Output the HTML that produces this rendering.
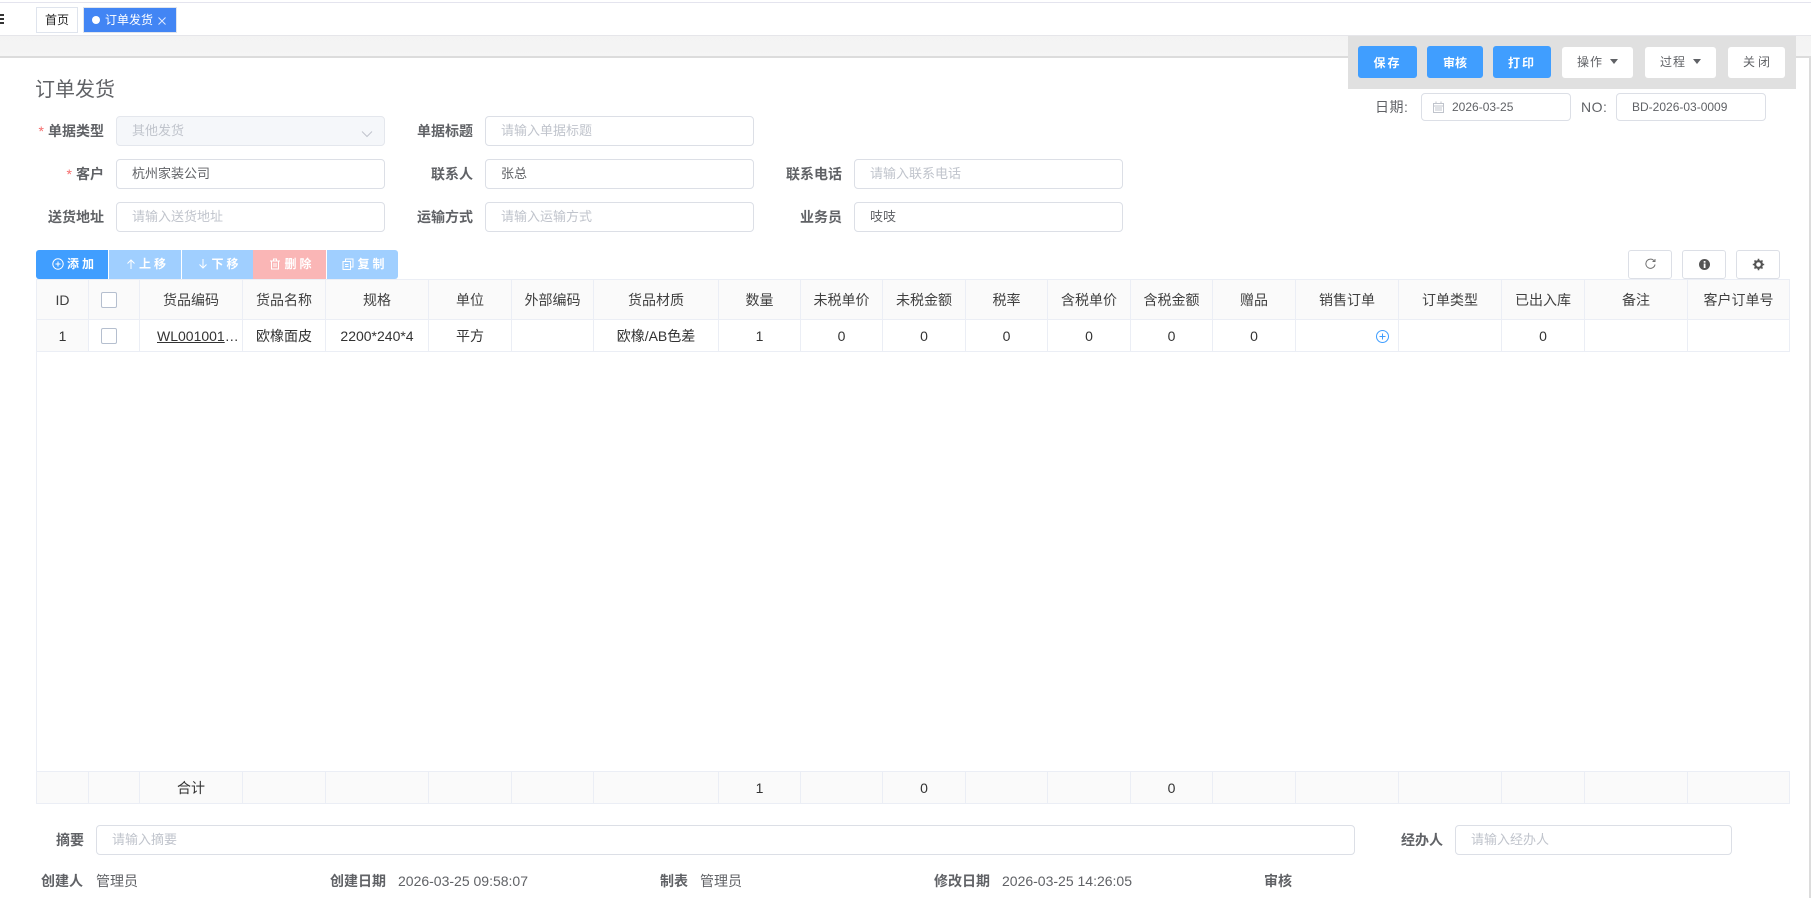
<!DOCTYPE html>
<html lang="zh-CN"><head><meta charset="utf-8"><title>订单发货</title>
<style>
*{box-sizing:border-box}
html,body{margin:0;padding:0;width:1811px;height:898px;overflow:hidden;background:#fff;font-family:"Liberation Sans","Noto Sans CJK SC",sans-serif;color:#606266}
.a{position:absolute;white-space:nowrap}
.lb{position:absolute;height:30px;line-height:30px;font-size:14px;font-weight:700;color:#606266;text-align:right;white-space:nowrap}
.lb i{font-style:normal;color:#f56c6c;font-weight:400;margin-right:4px}
.in{position:absolute;height:30px;line-height:28px;border:1px solid #dcdfe6;border-radius:4px;background:#fff;padding-left:15px;font-size:13px;color:#606266;white-space:nowrap}
.in.s{font-size:12px}
.ph{color:#c0c4cc}
.btn{position:absolute;border-radius:3px;text-align:center;font-size:12px;white-space:nowrap}
.p{background:#409eff;color:#fff;font-weight:700;top:46px;height:32px;line-height:32px;letter-spacing:2px;border:1px solid #409eff}
.w{background:#fff;color:#606266;top:47px;height:31px;line-height:31px;letter-spacing:1px}
.car{display:inline-block;width:0;height:0;border:4px solid transparent;border-top:5px solid #606266;border-bottom:0;margin-left:7px;vertical-align:2px}
.g{position:absolute;top:250px;height:29px;line-height:29px;color:#fff;font-size:12px;font-weight:700;letter-spacing:3px;text-align:center;white-space:nowrap;padding-left:5px}
.g svg{vertical-align:-2px;margin-right:3px}
.tb{position:absolute;top:250px;height:29px;width:44px;border:1px solid #dcdfe6;border-radius:3px;background:#fff}
.tb svg{position:absolute;left:15px;top:7px}
table{position:absolute;left:36px;border-collapse:collapse;table-layout:fixed;width:1754px;font-size:14px;color:#333}
td{border:1px solid #ebeef5;padding:0;text-align:center;overflow:hidden;white-space:nowrap}
.hd td{background:#fafafa;height:40px;color:#404040}
.rw td{height:32px;font-size:14px;color:#333}
.ft td{background:#fafafa;height:32px;font-size:14px}
.cb{display:inline-block;width:16px;height:16px;border:1px solid #b5bfcf;border-radius:2px;background:#fff;vertical-align:middle}
.ck{text-align:left;padding-left:12px}
.ds{position:absolute;top:881px;transform:translateY(-50%);font-size:14px;color:#606266;white-space:nowrap}
.ds b{font-weight:700}
</style></head><body>

<!-- top bars -->
<div class="a" style="left:0;top:2px;width:1811px;height:1px;background:#e4e4ee"></div>
<div class="a" style="left:0;top:35px;width:1811px;height:1px;background:#e6e6ea"></div>
<div class="a" style="left:0;top:36px;width:1811px;height:20px;background:linear-gradient(#f3f3f3,#f5f5f5)"></div>
<div class="a" style="left:0;top:56px;width:1811px;height:2px;background:#dcdcdc"></div>
<div class="a" style="left:1809px;top:56px;width:2px;height:842px;background:#dcdcdc"></div>

<div class="a" style="left:0;top:14px;width:4px;height:2px;background:#333"></div>
<div class="a" style="left:0;top:18px;width:4px;height:2px;background:#333"></div>
<div class="a" style="left:0;top:22px;width:4px;height:2px;background:#333"></div>

<div class="a" style="left:36px;top:7px;width:42px;height:26px;border:1px solid #dfe4ed;background:#fff;color:#222;font-size:12px;line-height:24px;text-align:center">首页</div>
<div class="a" style="left:83px;top:7px;width:94px;height:26px;border:1px solid #dfe4ed;background:#4285f4;color:#fff;font-size:12px;line-height:24px;padding-left:8px"><span style="display:inline-block;width:8px;height:8px;border-radius:50%;background:#fff;margin-right:5px;vertical-align:0"></span>订单发货<svg width="8" height="8" viewBox="0 0 8 8" style="margin-left:5px;vertical-align:-1px"><path d="M.5 .5L7.500 7.500M7.500 .5L.5 7.500" stroke="#dfe9ff" stroke-width="1" fill="none"/></svg></div>

<!-- action panel -->
<div class="a" style="left:1348px;top:36px;width:448px;height:53px;background:#e0e0e0"></div>
<div class="btn p" style="left:1358px;width:59px">保存</div>
<div class="btn p" style="left:1427px;width:56px;letter-spacing:0">审核</div>
<div class="btn p" style="left:1493px;width:58px">打印</div>
<div class="btn w" style="left:1562px;width:71px">操作<span class="car"></span></div>
<div class="btn w" style="left:1645px;width:71px">过程<span class="car"></span></div>
<div class="btn w" style="left:1728px;width:57px;letter-spacing:3px;padding-left:3px">关闭</div>

<!-- date / no -->
<div class="a" style="left:1375px;top:93px;height:28px;line-height:28px;font-size:14px;color:#606266;letter-spacing:.5px">日期:</div>
<div class="in s" style="left:1421px;top:93px;width:150px;height:28px;line-height:26px;padding-left:30px">2026-03-25</div>
<svg class="a" style="left:1433px;top:101px" width="11" height="12" viewBox="0 0 11 12"><path d="M.5 2.500h10v9H.5zM.5 5h10M2 7h7M2 9h7M3 .5v2M8 .5v2" stroke="#c0c4cc" fill="none"/></svg>
<div class="a" style="left:1581px;top:93px;height:28px;line-height:28px;font-size:14px;color:#606266;letter-spacing:.5px">NO:</div>
<div class="in s" style="left:1616px;top:93px;width:150px;height:28px;line-height:26px;">BD-2026-03-0009</div>

<!-- title -->
<div class="a" style="left:35px;top:75px;font-size:20px;line-height:30px;color:#606266;font-weight:400">订单发货</div>

<!-- form -->
<div class="lb" style="left:20px;width:84px;top:116px"><i>*</i>单据类型</div>
<div class="in" style="left:116px;top:116px;width:269px;background:#f5f7fa;color:#c0c4cc;border-color:#e4e7ed">其他发货</div>
<svg class="a" style="left:361px;top:130px" width="12" height="8" viewBox="0 0 12 8"><path d="M1 1.500l5 5 5-5" stroke="#c0c4cc" fill="none"/></svg>
<div class="lb" style="left:400px;width:73px;top:116px">单据标题</div>
<div class="in ph" style="left:485px;top:116px;width:269px">请输入单据标题</div>

<div class="lb" style="left:20px;width:84px;top:159px"><i>*</i>客户</div>
<div class="in" style="left:116px;top:159px;width:269px">杭州家装公司</div>
<div class="lb" style="left:400px;width:73px;top:159px">联系人</div>
<div class="in" style="left:485px;top:159px;width:269px">张总</div>
<div class="lb" style="left:769px;width:73px;top:159px">联系电话</div>
<div class="in ph" style="left:854px;top:159px;width:269px">请输入联系电话</div>

<div class="lb" style="left:20px;width:84px;top:202px">送货地址</div>
<div class="in ph" style="left:116px;top:202px;width:269px">请输入送货地址</div>
<div class="lb" style="left:400px;width:73px;top:202px">运输方式</div>
<div class="in ph" style="left:485px;top:202px;width:269px">请输入运输方式</div>
<div class="lb" style="left:769px;width:73px;top:202px">业务员</div>
<div class="in" style="left:854px;top:202px;width:269px">吱吱</div>

<!-- grid toolbar -->
<div class="g" style="left:36px;width:72px;background:#409eff;border-radius:3px 0 0 3px"><svg width="12" height="12" viewBox="0 0 12 12"><circle cx="6" cy="6" r="5.200" stroke="#fff" fill="none"/><path d="M3.500 6h5M6 3.500v5" stroke="#fff"/></svg>添加</div>
<div class="g" style="left:109px;width:72px;background:#a0cfff"><svg width="10" height="12" viewBox="0 0 10 12"><path d="M5 11V2M1.500 5.500L5 2l3.500 3.500" stroke="#fff" fill="none"/></svg>上移</div>
<div class="g" style="left:182px;width:71px;background:#a0cfff"><svg width="10" height="12" viewBox="0 0 10 12"><path d="M5 1v9M1.500 6.500L5 10l3.500-3.500" stroke="#fff" fill="none"/></svg>下移</div>
<div class="g" style="left:253px;width:73px;background:#fab6b6"><svg width="12" height="12" viewBox="0 0 12 12"><path d="M1 3h10M4.500 3V1h3v2M2.500 3v8h7V3M5 5v4M7 5v4" stroke="#fff" fill="none"/></svg>删除</div>
<div class="g" style="left:327px;width:71px;background:#a0cfff;border-radius:0 3px 3px 0"><svg width="12" height="12" viewBox="0 0 12 12"><path d="M1 3.500h7.500v8H1zM3.500 3.500V1H11v8H8.500M3 6.500h3.500M3 8.500h3.500" stroke="#fff" fill="none"/></svg>复制</div>

<div class="tb" style="left:1628px"><svg width="13" height="13" viewBox="0 0 13 13"><path d="M10.500 3.500A4.600 4.600 0 1 0 11 6.500M8.500 3.500h2.500V1" stroke="#707070" fill="none"/></svg></div>
<div class="tb" style="left:1682px"><svg width="13" height="13" viewBox="0 0 13 13"><circle cx="6.500" cy="6.500" r="5.500" fill="#555"/><rect x="5.700" y="5.500" width="1.800" height="4.500" fill="#fff"/><rect x="5.700" y="3" width="1.800" height="1.700" fill="#fff"/></svg></div>
<div class="tb" style="left:1736px"><svg width="13" height="13" viewBox="0 0 13 13"><circle cx="6.500" cy="6.500" r="3.400" fill="none" stroke="#555" stroke-width="2.200"/><path d="M6.500 .8v2M6.500 10.200v2M.8 6.500h2M10.200 6.500h2M2.500 2.500l1.400 1.400M9.100 9.100l1.400 1.400M10.500 2.500L9.100 3.900M3.900 9.100l-1.400 1.400" stroke="#555" stroke-width="1.600"/></svg></div>

<!-- grid frame -->
<div class="a" style="left:36px;top:279px;width:1px;height:524px;background:#ebeef5"></div>

<table style="top:279px">
<colgroup><col style="width:52px"><col style="width:51px"><col style="width:103px"><col style="width:83px"><col style="width:103px"><col style="width:83px"><col style="width:82px"><col style="width:125px"><col style="width:82px"><col style="width:82px"><col style="width:83px"><col style="width:82px"><col style="width:83px"><col style="width:82px"><col style="width:83px"><col style="width:103px"><col style="width:103px"><col style="width:83px"><col style="width:103px"><col style="width:102px"></colgroup>
<tr class="hd"><td>ID</td><td class="ck"><span class="cb"></span></td><td>货品编码</td><td>货品名称</td><td>规格</td><td>单位</td><td>外部编码</td><td>货品材质</td><td>数量</td><td>未税单价</td><td>未税金额</td><td>税率</td><td>含税单价</td><td>含税金额</td><td>赠品</td><td>销售订单</td><td>订单类型</td><td>已出入库</td><td>备注</td><td>客户订单号</td></tr>
<tr class="rw"><td style="background:#fafafa">1</td><td class="ck"><span class="cb"></span></td><td style="text-align:left;padding-left:17px"><span style="text-decoration:underline">WL001001</span>…</td><td>欧橡面皮</td><td>2200*240*4</td><td>平方</td><td></td><td>欧橡/AB色差</td><td>1</td><td>0</td><td>0</td><td>0</td><td>0</td><td>0</td><td>0</td><td style="text-align:right;padding-right:9px"><svg width="13" height="13" viewBox="0 0 13 13" style="vertical-align:middle"><circle cx="6.500" cy="6.500" r="6" fill="none" stroke="#409eff"/><path d="M3.500 6.500h6M6.500 3.500v6" stroke="#409eff"/></svg></td><td></td><td>0</td><td></td><td></td></tr>
</table>

<table style="top:771px">
<colgroup><col style="width:52px"><col style="width:51px"><col style="width:103px"><col style="width:83px"><col style="width:103px"><col style="width:83px"><col style="width:82px"><col style="width:125px"><col style="width:82px"><col style="width:82px"><col style="width:83px"><col style="width:82px"><col style="width:83px"><col style="width:82px"><col style="width:83px"><col style="width:103px"><col style="width:103px"><col style="width:83px"><col style="width:103px"><col style="width:102px"></colgroup>
<tr class="ft"><td></td><td></td><td>合计</td><td></td><td></td><td></td><td></td><td></td><td>1</td><td></td><td>0</td><td></td><td></td><td>0</td><td></td><td></td><td></td><td></td><td></td><td></td></tr>
</table>

<!-- bottom -->
<div class="lb" style="left:40px;width:44px;top:825px">摘要</div>
<div class="in ph" style="left:96px;top:825px;width:1259px">请输入摘要</div>
<div class="lb" style="left:1390px;width:53px;top:825px">经办人</div>
<div class="in ph" style="left:1455px;top:825px;width:277px">请输入经办人</div>

<div class="ds" style="left:41px"><b>创建人</b></div>
<div class="ds" style="left:96px">管理员</div>
<div class="ds" style="left:330px"><b>创建日期</b></div>
<div class="ds" style="left:398px">2026-03-25 09:58:07</div>
<div class="ds" style="left:660px"><b>制表</b></div>
<div class="ds" style="left:700px">管理员</div>
<div class="ds" style="left:934px"><b>修改日期</b></div>
<div class="ds" style="left:1002px">2026-03-25 14:26:05</div>
<div class="ds" style="left:1264px"><b>审核</b></div>

</body></html>
